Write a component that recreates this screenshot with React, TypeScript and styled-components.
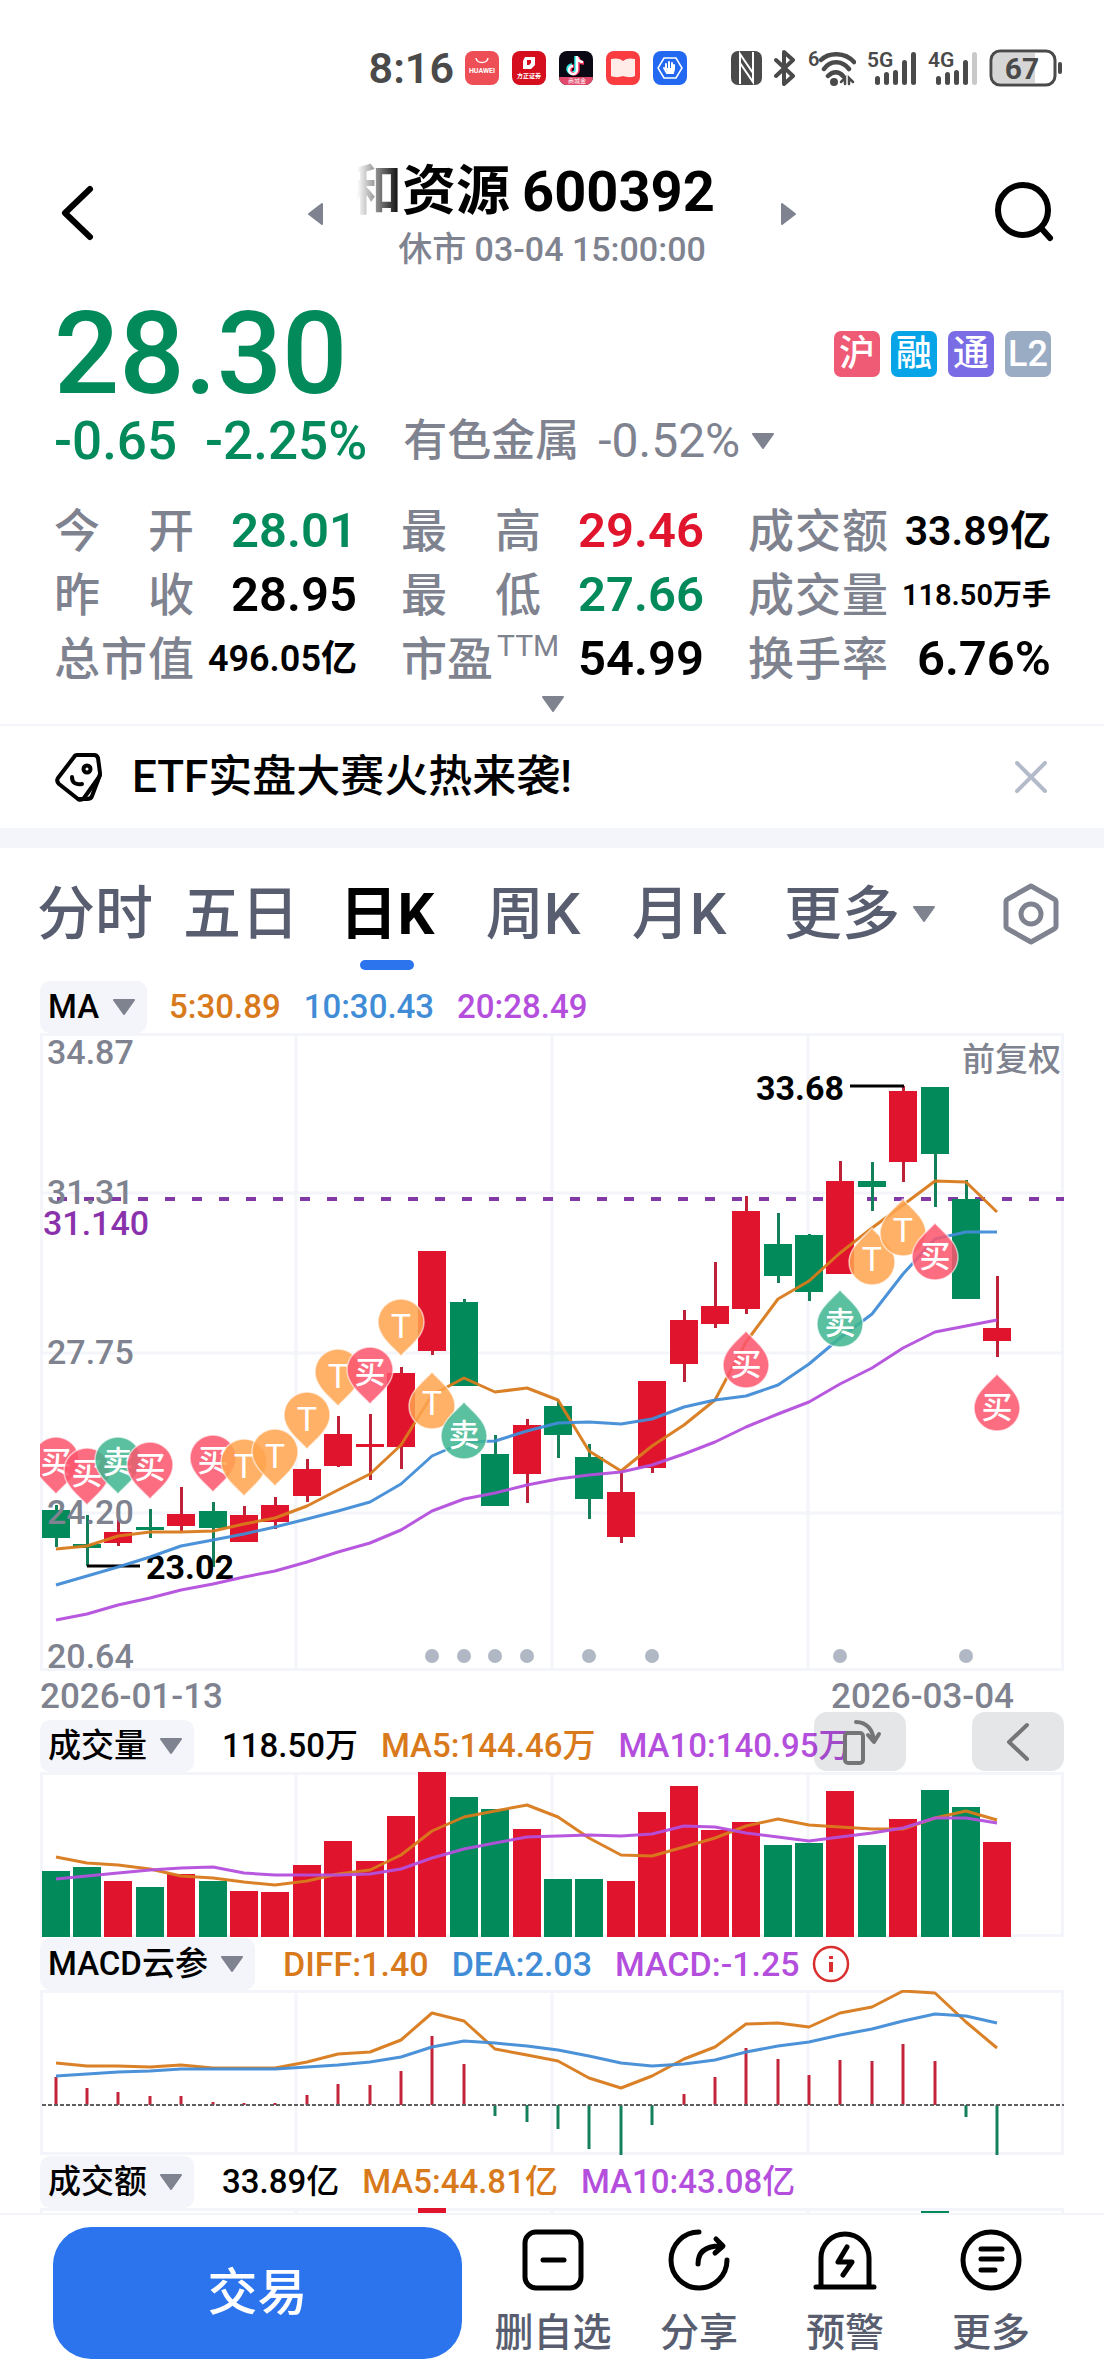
import React from "react";
import styled, { createGlobalStyle } from "styled-components";

const GREEN = "#028a5b";
const RED = "#e0142c";
const GRAY = "#7f8390";
const SLATE = "#585e70";
const ORANGE = "#d87a1c";
const BLUE = "#418cd6";
const PURPLE = "#b44fdd";
const GRID = "#f4f5fa";
const FONT = 'Roboto, "Noto Sans CJK SC", sans-serif';

const GlobalStyle = createGlobalStyle`
  *, *::before, *::after { box-sizing: border-box; }
  body { margin: 0; background: #fff; color: #000; font-family: ${FONT}; }
  button, select { margin: 0; padding: 0; border: 0; background: none; color: inherit; font: inherit; cursor: pointer; }
  svg { display: block; flex: none; }
`;

/* ---------- layout ---------- */

const Page = styled.div`
  display: flex;
  flex-direction: column;
  height: 100vh;
`;

const Content = styled.main`
  flex: 1;
  min-height: 0;
  overflow-y: auto;
  scrollbar-width: none;
`;

const StatusBar = styled.div`
  display: flex;
  align-items: center;
  justify-content: flex-end;
  gap: 44px;
  height: 136px;
  padding-right: 42px;
  color: #4a4a4a;
`;

const StatusGroup = styled.div<{ $gap: number }>`
  display: flex;
  align-items: center;
  gap: ${(p) => p.$gap}px;
`;

const Clock = styled.span`
  font-size: 43px;
  line-height: 44px;
  font-weight: 600;
`;

const Header = styled.header`
  display: grid;
  grid-template-columns: 1fr auto 1fr;
  align-items: center;
  height: 156px;
  padding: 0 48px;
`;

const IconButton = styled.button<{ $end?: boolean }>`
  display: flex;
  justify-self: ${(p) => (p.$end ? "end" : "start")};
`;

const Switcher = styled.div`
  display: flex;
  align-items: center;
  gap: 34px;
`;

const TitleBlock = styled.div`
  display: flex;
  flex-direction: column;
  gap: 4px;
  width: 390px;
`;

const TitleWindow = styled.h1`
  display: flex;
  gap: 12px;
  margin: 0;
  overflow: hidden;
  font-size: 56px;
  line-height: 66px;
  font-weight: 700;
  white-space: nowrap;
  mask-image: linear-gradient(to right, transparent, #000 44px);
`;

const StockName = styled.span`
  margin-left: -9px;
  font-size: 54px;
`;

const Session = styled.p`
  margin: 0;
  text-align: center;
  font-size: 34px;
  line-height: 40px;
  font-weight: 500;
  color: ${GRAY};
`;

const Quote = styled.section`
  padding: 6px 53px 0 54px;
`;

const PriceRow = styled.div`
  display: flex;
  align-items: center;
  justify-content: space-between;
  height: 112px;
`;

const Price = styled.strong`
  font-size: 115px;
  line-height: 112px;
  font-weight: 500;
  color: ${GREEN};
`;

const Badges = styled.div`
  display: flex;
  gap: 11px;
`;

const Badge = styled.span<{ $bg: string }>`
  display: flex;
  align-items: center;
  justify-content: center;
  width: 46px;
  height: 46px;
  border-radius: 7px;
  background: ${(p) => p.$bg};
  color: #fff;
  font-size: 36px;
  line-height: 46px;
  font-weight: 500;
`;

const ChangeRow = styled.div`
  display: flex;
  align-items: center;
  height: 62px;
  margin-bottom: 27px;
`;

const Change = styled.span`
  margin-right: 28px;
  font-size: 53px;
  line-height: 62px;
  font-weight: 500;
  color: ${GREEN};
`;

const Sector = styled.button`
  display: flex;
  align-items: center;
  margin-left: 8px;
  font-size: 44px;
  line-height: 62px;
  font-weight: 500;
  color: ${GRAY};
  gap: 11px;
`;

const SectorChange = styled.span`
  margin-left: 8px;
  font-size: 48px;
  font-weight: 400;
`;

const Stats = styled.dl`
  display: grid;
  grid-template-columns: repeat(3, 1fr);
  column-gap: 44px;
  margin: 0;
`;

const Stat = styled.div`
  display: flex;
  justify-content: space-between;
  align-items: center;
  height: 64px;
`;

const StatLabel = styled.dt`
  display: flex;
  justify-content: space-between;
  min-width: 140px;
  font-size: 46px;
  line-height: 58px;
  font-weight: 500;
  color: ${GRAY};
`;

const Sup = styled.sup`
  align-self: flex-start;
  margin-left: 4px;
  font-size: 30px;
  line-height: 32px;
  font-weight: 400;
`;

const StatValue = styled.dd<{ $size: number; $color?: string }>`
  margin: 0;
  font-size: ${(p) => p.$size}px;
  line-height: 64px;
  font-weight: 600;
  color: ${(p) => p.$color ?? "#000"};
`;

const Expand = styled.button`
  display: flex;
  justify-content: center;
  width: 100%;
  height: 33px;
  padding-top: 5px;
`;

const Banner = styled.aside`
  display: flex;
  align-items: center;
  height: 104px;
  padding: 0 57px 0 54px;
  border-top: 2px solid ${GRID};
`;

const BannerLink = styled.a`
  flex: 1;
  display: flex;
  align-items: center;
  gap: 28px;
  color: #000;
  text-decoration: none;
  font-size: 44px;
  line-height: 56px;
  font-weight: 500;
`;

const Band = styled.div`
  height: 20px;
  background: ${GRID};
`;

const Tabs = styled.nav`
  display: flex;
  align-items: center;
  justify-content: space-between;
  height: 132px;
  padding: 0 44px 0 22px;
`;

const TabList = styled.div`
  display: flex;
`;

const Tab = styled.button<{ $active?: boolean; $wide?: boolean }>`
  position: relative;
  display: flex;
  align-items: center;
  justify-content: center;
  gap: 12px;
  width: ${(p) => (p.$wide ? 216 : 146)}px;
  height: 112px;
  font-size: 58px;
  line-height: 64px;
  font-weight: ${(p) => (p.$active ? 700 : 500)};
  color: ${(p) => (p.$active ? "#000" : SLATE)};

  &::after {
    content: "";
    display: ${(p) => (p.$active ? "block" : "none")};
    position: absolute;
    bottom: 0;
    width: 54px;
    height: 10px;
    border-radius: 5px;
    background: #2b74ee;
  }
`;

const Charts = styled.section`
  padding: 0 40px;
`;

const Legend = styled.div<{ $size?: number }>`
  position: relative;
  display: flex;
  align-items: center;
  height: 53px;
  font-size: ${(p) => p.$size ?? 33}px;
  line-height: 52px;
  font-weight: 500;
  white-space: nowrap;
`;

const Chip = styled.label<{ $gap: number }>`
  display: flex;
  align-items: center;
  gap: 12px;
  height: 52px;
  margin-right: ${(p) => p.$gap}px;
  padding: 0 11px 0 8px;
  border-radius: 10px;
  background: ${GRID};
`;

const ChipSelect = styled.select`
  appearance: none;
  font-size: 33px;
  line-height: 52px;
  outline: none;
`;

const LegendItem = styled.span<{ $color?: string }>`
  margin-right: 23px;
  color: ${(p) => p.$color ?? "#000"};

  &:last-of-type {
    margin-right: 12px;
  }
`;

const FloatTools = styled.div`
  position: absolute;
  right: 0;
  bottom: 1px;
  display: flex;
  gap: 66px;
`;

const FloatButton = styled.button`
  display: flex;
  align-items: center;
  justify-content: center;
  width: 92px;
  height: 59px;
  border-radius: 13px;
  background: rgba(20, 25, 50, 0.11);
`;

const Plot = styled.svg`
  width: 100%;
  height: auto;
  font-family: ${FONT};
  font-size: 34px;
  font-weight: 500;
`;

const Dates = styled.div`
  display: flex;
  justify-content: space-between;
  height: 48px;
  padding: 4px 50px 0 0;
  font-size: 35px;
  line-height: 44px;
  font-weight: 500;
  color: ${GRAY};
`;

const Footer = styled.footer`
  display: flex;
  flex: none;
  padding: 12px 40px 17px 53px;
  border-top: 2px solid ${GRID};
  background: #fff;
`;

const Trade = styled.button`
  flex: 409 1 0;
  height: 132px;
  margin-right: 18px;
  border-radius: 38px;
  background: #2b74ee;
  color: #fff;
  font-size: 50px;
  line-height: 64px;
  font-weight: 500;
`;

const Action = styled.button`
  flex: 146 1 0;
  display: flex;
  flex-direction: column;
  align-items: center;
  gap: 16px;
  padding-top: 2px;
  font-size: 39px;
  line-height: 52px;
  font-weight: 500;
  color: ${SLATE};
  white-space: nowrap;
`;

/* ---------- icons ---------- */

const Caret = ({ size = 24 }: { size?: number }) => (
  <svg width={size} height={16} viewBox="0 0 24 16" aria-hidden="true">
    <path d="M2 1h20L12 15z" fill={GRAY} stroke={GRAY} strokeWidth="2" strokeLinejoin="round" />
  </svg>
);

const SideArrow = ({ right }: { right?: boolean }) => (
  <svg width="15" height="24" viewBox="0 0 15 24" aria-hidden="true">
    <path d={right ? "M1 2v20L14 12z" : "M14 2v20L1 12z"} fill={GRAY} stroke={GRAY} strokeWidth="2" strokeLinejoin="round" />
  </svg>
);

const AppIcon = ({ bg, children }: { bg: string; children: React.ReactNode }) => (
  <svg width="34" height="34" viewBox="0 0 34 34" aria-hidden="true">
    <rect width="34" height="34" rx="8" fill={bg} />
    {children}
  </svg>
);

const Signal = ({ label, weak }: { label: string; weak?: boolean }) => (
  <svg width="50" height="36" viewBox="0 0 50 36" fill="#4a4a4a">
    <text x="0" y="17" fontSize="21" fontWeight="600" fontFamily={FONT}>{label}</text>
    <rect x="8" y="26" width="5" height="9" rx="2.5" />
    <rect x="17" y="22" width="5" height="13" rx="2.5" />
    <rect x="26" y="20" width="5" height="15" rx="2.5" />
    <rect x="35" y="10" width="5" height="25" rx="2.5" />
    <rect x="44" y="2" width="5" height="33" rx="2.5" fill={weak ? "#c9c9c9" : "#4a4a4a"} />
  </svg>
);

const StatusIcons = () => (
  <StatusGroup $gap={11}>
    <svg width="31" height="34" viewBox="0 0 31 34" aria-hidden="true">
      <rect width="31" height="34" rx="7" fill="#4a4a4a" />
      <path d="M9 33V3l13 19M22 1v30L9 12" fill="none" stroke="#fff" strokeWidth="2" />
    </svg>
    <svg width="24" height="36" viewBox="0 0 24 36" fill="none" stroke="#4a4a4a" strokeWidth="4" strokeLinejoin="round" strokeLinecap="round" aria-hidden="true">
      <path d="M3 10l17 16-9 8V2l9 8L3 26" />
    </svg>
    <svg width="48" height="36" viewBox="0 0 48 36" fill="none" stroke="#4a4a4a" strokeWidth="4.5" strokeLinecap="round" aria-hidden="true">
      <text x="0" y="16" fontSize="20" fontWeight="600" fontFamily={FONT} fill="#4a4a4a" stroke="none">6</text>
      <path d="M13 10C21 2 37 2 46 12M16 19C22 10 34 10 41 19M20 26c5-5 11-5 15 0" />
      <circle cx="26" cy="32" r="4" fill="#4a4a4a" stroke="none" />
      <path d="M33 32l4-4v6M41 34v-6l4 4" strokeWidth="2.5" />
    </svg>
    <Signal label="5G" />
    <Signal label="4G" weak />
    <svg width="73" height="38" viewBox="0 0 73 38">
      <path d="M10 4h36v30H10a6 6 0 0 1-6-6V10a6 6 0 0 1 6-6z" fill="#d6d6d6" />
      <rect x="2" y="2" width="64" height="34" rx="9" fill="none" stroke="#4a4a4a" strokeWidth="3" />
      <rect x="69" y="13" width="4" height="12" rx="2" fill="#4a4a4a" />
      <text x="33" y="30" textAnchor="middle" fontSize="30" fontWeight="700" fontFamily={FONT} fill="#4a4a4a">67</text>
    </svg>
  </StatusGroup>
);

const AppIcons = () => (
  <StatusGroup $gap={13}>
    <AppIcon bg="#ee4e55">
      <path d="M11 7c1 6 11 6 12 0" fill="none" stroke="#fff" strokeWidth="1.5" />
      <text x="17" y="22" textAnchor="middle" fontSize="7" fontWeight="700" fontFamily={FONT} fill="#fff">HUAWEI</text>
    </AppIcon>
    <AppIcon bg="#d50f1d">
      <path d="M13 6h10v8l-4 4h-8v-8z" fill="#fff" />
      <path d="M15 9h4v3l-2 2h-2z" fill="#d50f1d" />
      <text x="17" y="27" textAnchor="middle" fontSize="6" fontWeight="700" fontFamily={FONT} fill="#fff">方正证券</text>
    </AppIcon>
    <AppIcon bg="#0b0914">
      <path d="M0 26h34a8 8 0 0 1-8 8H8a8 8 0 0 1-8-8z" fill="#e2496b" />
      <g fill="none" strokeWidth="3.5">
        <path d="M17 5v13a4 4 0 1 1-4-4M17 6c1 4 3 5 6 5" stroke="#2ff0ea" />
        <path d="M19 6v13a4 4 0 1 1-4-4M19 7c1 4 3 5 6 5" stroke="#f4315c" />
        <path d="M18 5v14a4 4 0 1 1-4-4M18 6c1 4 3 5 6 5" stroke="#fff" strokeWidth="2.5" />
      </g>
      <text x="18" y="32" textAnchor="middle" fontSize="6" fontFamily={FONT} fill="#fff">商城金</text>
    </AppIcon>
    <AppIcon bg="#fa3b3f">
      <path d="M5 8c4-1 9-1 12 2 3-3 8-3 12-2v17c-4 2-9 1-12 0-3 1-8 2-12 0z" fill="#ffece8" />
    </AppIcon>
    <AppIcon bg="#2368f0">
      <path d="M11 7h12l6 10-6 10H11L5 17z" fill="none" stroke="#fff" strokeWidth="1.5" />
      <path d="M13 18v-5M16 17v-6M19 17v-5M21 18v-4M11 17l3 5h6l1-4" stroke="#fff" strokeWidth="2" fill="none" strokeLinecap="round" />
      <path d="M13 17h8v4l-2 2h-4z" fill="#fff" />
    </AppIcon>
  </StatusGroup>
);

/* ---------- chart data ---------- */

type Candle = [up: 0 | 1, high: number, low: number, top: number, bottom: number];

const candles: Candle[] = [
  [0, 472, 514, 477, 505], [0, 482, 533, 511, 515], [1, 472, 513, 499, 510], [0, 476, 505, 494, 497],
  [1, 454, 498, 481, 493], [0, 469, 534, 478, 495], [1, 473, 509, 482, 509], [1, 464, 496, 472, 489],
  [1, 426, 469, 436, 463], [1, 383, 434, 401, 433], [1, 381, 447, 411, 414], [1, 334, 436, 340, 414],
  [1, 218, 322, 218, 318], [0, 266, 353, 269, 353], [0, 402, 473, 421, 473], [1, 386, 470, 392, 441],
  [0, 368, 425, 373, 402], [0, 411, 486, 424, 466], [1, 439, 510, 459, 504], [1, 348, 440, 348, 435],
  [1, 277, 349, 287, 331], [1, 229, 295, 273, 291], [1, 163, 281, 178, 276], [0, 180, 250, 211, 243],
  [0, 201, 268, 202, 259], [1, 128, 241, 148, 241], [0, 129, 178, 148, 154], [1, 53, 149, 58, 129],
  [0, 54, 174, 54, 121], [0, 147, 266, 166, 266], [1, 243, 324, 295, 308],
];

const ma5 = [516, 513, 503, 499, 499, 498, 491, 485, 473, 457, 441, 412, 362, 345, 359, 355, 367, 418, 438, 413, 392, 367, 309, 266, 248, 220, 195, 172, 148, 149, 179];
const ma10 = [552, 543, 534, 524, 513, 507, 501, 494, 486, 478, 469, 451, 423, 409, 408, 398, 390, 389, 391, 386, 374, 367, 363, 352, 331, 305, 281, 241, 206, 199, 199];
const ma20 = [587, 581, 572, 565, 557, 551, 544, 538, 529, 519, 510, 497, 478, 466, 460, 452, 446, 442, 439, 432, 421, 409, 394, 381, 369, 351, 335, 315, 299, 293, 287];

const volume = [99, 95, 109, 115, 102, 109, 119, 120, 93, 69, 89, 44, 0, 25, 37, 57, 107, 107, 109, 40, 14, 58, 50, 73, 71, 19, 73, 47, 18, 35, 70];
const vol5 = [85, 91, 93, 97, 104, 106, 110, 113, 109, 102, 98, 83, 59, 45, 39, 33, 45, 66, 83, 84, 75, 66, 54, 47, 53, 55, 57, 57, 46, 39, 48];
const vol10 = [107, 104, 101, 98, 96, 95, 101, 103, 103, 103, 102, 97, 86, 77, 71, 65, 64, 63, 64, 62, 54, 55, 61, 65, 69, 65, 61, 56, 46, 46, 51];
const amount = [110, 107, 115, 119, 110, 114, 121, 121, 100, 80, 95, 50, 0, 32, 48, 62, 110, 112, 116, 52, 22, 58, 46, 68, 65, 8, 64, 30, 3, 26, 66];

const diff = [73, 76, 76, 77, 75, 78, 78, 78, 72, 64, 62, 50, 23, 31, 59, 65, 71, 88, 98, 86, 69, 57, 34, 33, 37, 23, 17, 1, 3, 32, 58];
const dea = [86, 84, 82, 81, 79, 79, 79, 79, 77, 75, 72, 67, 57, 51, 53, 56, 60, 66, 73, 76, 74, 70, 62, 56, 52, 45, 39, 31, 24, 26, 33];
const macd = [87, 98, 102, 106, 106, 112, 113, 113, 105, 94, 95, 81, 46, 74, 126, 132, 139, 159, 165, 135, 104, 87, 58, 69, 85, 70, 71, 54, 71, 127, 165];

type PinKind = "买" | "卖" | "T";
const pins: { i: number; y: number; kind: PinKind; up?: boolean }[] = [
  { i: 0, y: 404, kind: "买" }, { i: 1, y: 415, kind: "买" }, { i: 2, y: 404, kind: "卖" }, { i: 3, y: 409, kind: "买" },
  { i: 5, y: 402, kind: "买" }, { i: 6, y: 406, kind: "T" }, { i: 7, y: 396, kind: "T" }, { i: 8, y: 359, kind: "T" },
  { i: 9, y: 316, kind: "T" }, { i: 10, y: 314, kind: "买" }, { i: 11, y: 266, kind: "T" },
  { i: 12, y: 339, kind: "T", up: true }, { i: 13, y: 369, kind: "卖", up: true }, { i: 22, y: 298, kind: "买", up: true },
  { i: 25, y: 257, kind: "卖", up: true }, { i: 26, y: 195, kind: "T", up: true }, { i: 27, y: 166, kind: "T", up: true },
  { i: 28, y: 190, kind: "买", up: true }, { i: 30, y: 341, kind: "买", up: true },
];
const pinColor: Record<PinKind, string> = { 买: "#fb556d", 卖: "#3fb68f", T: "#ffa44f" };

const cx = (i: number) => Math.round(15.7 + 31.39 * i);
const toPoints = (ys: number[]) => ys.map((y, i) => `${cx(i)},${y}`).join(" ");

const Line = ({ data, color }: { data: number[]; color: string }) => (
  <polyline points={toPoints(data)} fill="none" stroke={color} strokeWidth="3" strokeLinejoin="round" opacity="0.95" />
);

const Frame = ({ height, rows = [] }: { height: number; rows?: number[] }) => (
  <g stroke={GRID} strokeWidth="3" fill="none">
    <rect x="1.5" y="1.5" width="1021" height={height - 3} />
    {[256, 512, 768].map((x) => <path key={x} d={`M${x} 0V${height}`} />)}
    {rows.map((y) => <path key={y} d={`M0 ${y}H1024`} />)}
  </g>
);

const Pin = ({ i, y, kind, up }: { i: number; y: number; kind: PinKind; up?: boolean }) => (
  <g transform={`translate(${cx(i)} ${up ? y + 33 : y + 24})`}>
    <path
      d="M0 33C-7 25-23 14-23-1A23 23 0 0 1 23-1C23 14 7 25 0 33z"
      transform={up ? "rotate(180)" : undefined}
      fill={pinColor[kind]}
      fillOpacity="0.86"
      stroke="#fff"
      strokeOpacity="0.6"
      strokeWidth="1.5"
    />
    <text y={kind === "T" ? (up ? 10 : 15) : up ? 11 : 12} textAnchor="middle" fontSize={kind === "T" ? 34 : 31} fontWeight={kind === "T" ? 400 : 500} fill="#fff">{kind}</text>
  </g>
);

const PriceChart = () => (
  <Plot viewBox="0 0 1024 638" role="img" aria-label="日K线图">
    <Frame height={638} rows={[160, 320, 480]} />
    <path d="M17 166H1024" stroke="#8238a5" strokeWidth="4" strokeDasharray="10 17" />
    {candles.map(([up, high, low, top, bottom], i) => (
      <g key={i} fill={up ? RED : GREEN}>
        <rect x={cx(i) - 1} y={high} width="3" height={low - high} fill={up ? "#bd2238" : "#14805a"} />
        <rect x={cx(i) - 14} y={top} width="28" height={bottom - top} />
      </g>
    ))}
    <g fill={GRAY}>
      <text x="7" y="31">34.87</text>
      <text x="7" y="171">31.31</text>
      <text x="7" y="331">27.75</text>
      <text x="7" y="491">24.20</text>
      <text x="7" y="635">20.64</text>
      <text x="1021" y="38" textAnchor="end" fontSize="33">前复权</text>
    </g>
    <text x="3" y="202" fill="#8a32ab">31.140</text>
    <path d="M47 533H100M810 53H864" stroke="#000" strokeWidth="3" />
    <g fontWeight="700">
      <text x="106" y="546">23.02</text>
      <text x="804" y="67" textAnchor="end">33.68</text>
    </g>
    <Line data={ma5} color={ORANGE} />
    <Line data={ma10} color={BLUE} />
    <Line data={ma20} color={PURPLE} />
    {pins.map((p) => <Pin key={p.i} {...p} />)}
    {[12, 13, 14, 15, 17, 19, 25, 29].map((i) => <circle key={i} cx={cx(i)} cy="623" r="7" fill="#b1b8c5" />)}
  </Plot>
);

const BarChart = ({ data, label, children }: { data: number[]; label: string; children?: React.ReactNode }) => (
  <Plot viewBox="0 0 1024 165" role="img" aria-label={label}>
    <Frame height={165} />
    {data.map((y, i) => (
      <rect key={i} x={cx(i) - 14} y={y} width="28" height={165 - y} fill={candles[i][0] ? RED : GREEN} />
    ))}
    {children}
  </Plot>
);

const MacdChart = () => (
  <Plot viewBox="0 0 1024 165" role="img" aria-label="MACD">
    <Frame height={165} />
    {macd.map((y, i) => (
      <path key={i} d={`M${cx(i)} 115V${y}`} stroke={y < 115 ? "#c4243a" : "#14805a"} strokeWidth="3" />
    ))}
    <path d="M2 115H1024" stroke="#5f5f5f" strokeWidth="2" strokeDasharray="4 2" />
    <Line data={diff} color={ORANGE} />
    <Line data={dea} color={BLUE} />
  </Plot>
);

/* ---------- page parts ---------- */

const stats: { label: string; sup?: string; value: string; size: number; color?: string }[] = [
  { label: "今开", value: "28.01", size: 49, color: GREEN },
  { label: "最高", value: "29.46", size: 49, color: RED },
  { label: "成交额", value: "33.89亿", size: 41 },
  { label: "昨收", value: "28.95", size: 49 },
  { label: "最低", value: "27.66", size: 49, color: GREEN },
  { label: "成交量", value: "118.50万手", size: 29 },
  { label: "总市值", value: "496.05亿", size: 36 },
  { label: "市盈", sup: "TTM", value: "54.99", size: 49 },
  { label: "换手率", value: "6.76%", size: 49 },
];

const IndicatorSelect = ({ name, gap = 28 }: { name: string; gap?: number }) => (
  <Chip $gap={gap}>
    <ChipSelect aria-label={`${name}指标`}>
      <option>{name}</option>
    </ChipSelect>
    <Caret />
  </Chip>
);

export default function App() {
  return (
    <Page>
      <GlobalStyle />
      <Content>
        <StatusBar>
          <StatusGroup $gap={11}>
            <Clock>8:16</Clock>
            <AppIcons />
          </StatusGroup>
          <StatusIcons />
        </StatusBar>

        <Header>
          <IconButton aria-label="返回">
            <svg width="52" height="60" viewBox="0 0 52 60" fill="none" stroke="#000" strokeWidth="6" strokeLinecap="round" strokeLinejoin="round">
              <path d="M42 5L17 29l25 24" />
            </svg>
          </IconButton>
          <Switcher>
            <IconButton aria-label="上一只"><SideArrow /></IconButton>
            <TitleBlock>
              <TitleWindow>
                <StockName>和资源</StockName>
                <span>600392</span>
              </TitleWindow>
              <Session>休市 03-04 15:00:00</Session>
            </TitleBlock>
            <IconButton aria-label="下一只"><SideArrow right /></IconButton>
          </Switcher>
          <IconButton $end aria-label="搜索">
            <svg width="62" height="66" viewBox="0 0 62 66" fill="none" stroke="#000" strokeWidth="6" strokeLinecap="round">
              <circle cx="29" cy="29" r="25" />
              <path d="M47 47l9 10" />
            </svg>
          </IconButton>
        </Header>

        <Quote>
          <PriceRow>
            <Price>28.30</Price>
            <Badges>
              <Badge $bg="#ef5b74">沪</Badge>
              <Badge $bg="#07a5e8">融</Badge>
              <Badge $bg="#7a6ce4">通</Badge>
              <Badge $bg="#9aabc4">L2</Badge>
            </Badges>
          </PriceRow>
          <ChangeRow>
            <Change>-0.65</Change>
            <Change>-2.25%</Change>
            <Sector>
              <span>有色金属</span>
              <SectorChange>-0.52%</SectorChange>
              <Caret />
            </Sector>
          </ChangeRow>
          <Stats>
            {stats.map((s) => (
              <Stat key={s.label}>
                <StatLabel>
                  {s.sup ? (
                    <>
                      {s.label}
                      <Sup>{s.sup}</Sup>
                    </>
                  ) : (
                    s.label.split("").map((ch) => <span key={ch}>{ch}</span>)
                  )}
                </StatLabel>
                <StatValue $size={s.size} $color={s.color}>{s.value}</StatValue>
              </Stat>
            ))}
          </Stats>
          <Expand aria-label="展开"><Caret /></Expand>
        </Quote>

        <Banner>
          <BannerLink href="#etf">
            <svg width="50" height="52" viewBox="0 0 50 52" fill="none" stroke="#000" strokeWidth="4" strokeLinejoin="round" strokeLinecap="round" aria-hidden="true">
              <path d="M23 4L40 4Q43 4 44 7L46 22Q46 24 45 26L30 47Q27 50 24 48L5 33Q2 30 4 27L20 6Q21 4 23 4z" />
              <path d="M46 24L38 45Q37 48 33 48H26" />
              <circle cx="33" cy="18" r="3.5" />
              <path d="M18 26c0 6 4 8 10 7" />
            </svg>
            ETF实盘大赛火热来袭!
          </BannerLink>
          <IconButton aria-label="关闭">
            <svg width="32" height="32" viewBox="0 0 32 32" stroke="#b3bac9" strokeWidth="4" strokeLinecap="round">
              <path d="M2 2l28 28M30 2L2 30" />
            </svg>
          </IconButton>
        </Banner>
        <Band />

        <Tabs>
          <TabList>
            <Tab>分时</Tab>
            <Tab>五日</Tab>
            <Tab $active>日K</Tab>
            <Tab>周K</Tab>
            <Tab>月K</Tab>
            <Tab $wide>更多<Caret /></Tab>
          </TabList>
          <IconButton aria-label="设置">
            <svg width="58" height="62" viewBox="0 0 58 62" fill="none" stroke={GRAY} strokeWidth="5" strokeLinejoin="round">
              <path d="M29 3L52 16Q54 17 54 19V43Q54 45 52 46L29 59L6 46Q4 45 4 43V19Q4 17 6 16z" />
              <circle cx="29" cy="31" r="10" />
            </svg>
          </IconButton>
        </Tabs>

        <Charts>
          <Legend>
            <IndicatorSelect name="MA" gap={22} />
            <LegendItem $color={ORANGE}>5:30.89</LegendItem>
            <LegendItem $color={BLUE}>10:30.43</LegendItem>
            <LegendItem $color={PURPLE}>20:28.49</LegendItem>
          </Legend>
          <PriceChart />
          <Dates>
            <time>2026-01-13</time>
            <time>2026-03-04</time>
          </Dates>

          <Legend>
            <IndicatorSelect name="成交量" />
            <LegendItem>118.50万</LegendItem>
            <LegendItem $color={ORANGE}>MA5:144.46万</LegendItem>
            <LegendItem $color={PURPLE}>MA10:140.95万</LegendItem>
            <FloatTools>
              <FloatButton aria-label="横屏">
                <svg width="44" height="50" viewBox="0 0 44 50" fill="none" stroke="#757578" strokeWidth="4" strokeLinecap="round" strokeLinejoin="round">
                  <rect x="7" y="16" width="18" height="30" rx="3" />
                  <path d="M18 5c11 0 17 8 18 19M30 18l6 7 5-8" />
                </svg>
              </FloatButton>
              <FloatButton aria-label="收起">
                <svg width="24" height="42" viewBox="0 0 24 42" fill="none" stroke="#757578" strokeWidth="4" strokeLinecap="round" strokeLinejoin="round">
                  <path d="M21 4L3 21l18 17" />
                </svg>
              </FloatButton>
            </FloatTools>
          </Legend>
          <BarChart data={volume} label="成交量">
            <Line data={vol5} color={ORANGE} />
            <Line data={vol10} color={PURPLE} />
          </BarChart>

          <Legend $size={34}>
            <IndicatorSelect name="MACD云参" />
            <LegendItem $color={ORANGE}>DIFF:1.40</LegendItem>
            <LegendItem $color={BLUE}>DEA:2.03</LegendItem>
            <LegendItem $color={PURPLE}>MACD:-1.25</LegendItem>
            <IconButton aria-label="说明">
              <svg width="38" height="38" viewBox="0 0 38 38" fill="none" stroke="#d9302f">
                <circle cx="19" cy="19" r="17" strokeWidth="2.5" />
                <path d="M19 11v3M19 17v10" strokeWidth="4" />
              </svg>
            </IconButton>
          </Legend>
          <MacdChart />

          <Legend>
            <IndicatorSelect name="成交额" />
            <LegendItem>33.89亿</LegendItem>
            <LegendItem $color={ORANGE}>MA5:44.81亿</LegendItem>
            <LegendItem $color={PURPLE}>MA10:43.08亿</LegendItem>
          </Legend>
          <BarChart data={amount} label="成交额" />
        </Charts>
      </Content>

      <Footer>
        <Trade>交易</Trade>
        <Action>
          <svg width="64" height="62" viewBox="0 0 64 62" fill="none" stroke="#000" strokeWidth="5" strokeLinecap="round">
            <rect x="4" y="3" width="56" height="56" rx="11" />
            <path d="M22 31h21" />
          </svg>
          删自选
        </Action>
        <Action>
          <svg width="64" height="62" viewBox="0 0 64 62" fill="none" stroke="#000" strokeWidth="5" strokeLinecap="round" strokeLinejoin="round">
            <path d="M32 3A28 28 0 1 0 60 31" />
            <path d="M31 35C31 23 38 17 53 17M49 10l7 7-8 7" />
          </svg>
          分享
        </Action>
        <Action>
          <svg width="64" height="62" viewBox="0 0 64 62" fill="none" stroke="#000" strokeWidth="5" strokeLinecap="round" strokeLinejoin="round">
            <path d="M3 58h58M8 57V29a24 24 0 0 1 48 0v28" />
            <path d="M34 18L25 33h14L30 46" />
          </svg>
          预警
        </Action>
        <Action>
          <svg width="64" height="62" viewBox="0 0 64 62" fill="none" stroke="#000" strokeWidth="5" strokeLinecap="round">
            <circle cx="32" cy="31" r="28" />
            <path d="M22 20h21M22 30h21M22 41h14" />
          </svg>
          更多
        </Action>
      </Footer>
    </Page>
  );
}
